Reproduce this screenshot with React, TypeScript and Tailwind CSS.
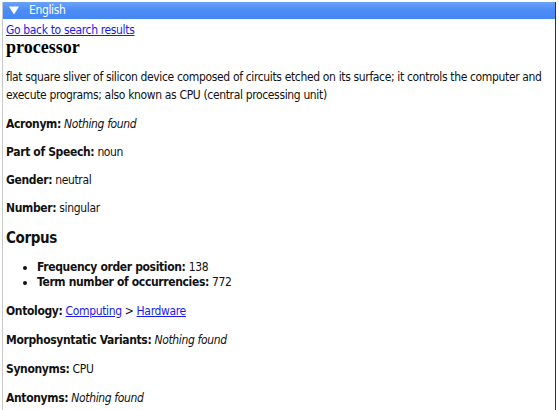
import React from "react";

const fields = [
  { label: "Acronym", value: "Nothing found", italic: true },
  { label: "Part of Speech", value: "noun" },
  { label: "Gender", value: "neutral" },
  { label: "Number", value: "singular" },
];

const lower = [
  { label: "Morphosyntatic Variants", value: "Nothing found", italic: true },
  { label: "Synonyms", value: "CPU" },
  { label: "Antonyms", value: "Nothing found", italic: true },
];

function Field({ label, value, italic }: { label: string; value: string; italic?: boolean }) {
  return (
    <p className="leading-[16px] mt-[12px] first:mt-[12px]">
      <b>{label}:</b> {italic ? <i>{value}</i> : value}
    </p>
  );
}

export default function App() {
  return (
    <div
      className="w-[559px] h-[410px] overflow-hidden bg-white text-[12px] tracking-[-0.35px] text-[#111]"
      style={{ fontFamily: '"DejaVu Sans Condensed", "DejaVu Sans", sans-serif' }}
    >
      <div className="mt-[2px] ml-[2px] w-[554px] h-[408px] border-l border-[#c8c8c8] border-r border-r-[#333]">
        <div className="h-[17px] bg-gradient-to-b from-[#6aa2f8] via-[#4b8bf5] to-[#4587f4] text-white flex items-center pl-[5px] leading-[17px]">
          <svg width="10" height="9" viewBox="0 0 10 9" className="ml-[1px] mr-[10px]">
            <path d="M0 0.5h10L5 8.5z" fill="white" />
          </svg>
          <span>English</span>
        </div>
        <div className="pl-[3px]">
          <a href="#" className="block mt-[4px] leading-[14px] text-[#1a1aee] underline">
            Go back to search results
          </a>
          <h1
            className="text-[18px] font-bold leading-[20px] tracking-normal text-black"
            style={{ fontFamily: '"Liberation Serif", "Times New Roman", serif' }}
          >
            processor
          </h1>
          <p className="mt-[11px] leading-[18px]">
            flat square sliver of silicon device composed of circuits etched on its surface; it controls the computer
            and execute programs; also known as CPU (central processing unit)
          </p>
          <div>
            {fields.map((f) => (
              <Field key={f.label} {...f} />
            ))}
          </div>
          <h2 className="mt-[12px] text-[15px] font-bold leading-[20px]">Corpus</h2>
          <ul className="mt-[11.5px] pl-[31px] list-disc leading-[15.5px]">
            <li>
              <b>Frequency order position:</b> 138
            </li>
            <li>
              <b>Term number of occurrencies:</b> 772
            </li>
          </ul>
          <p className="leading-[16px] mt-[12.5px]">
            <b>Ontology:</b>{" "}
            <a href="#" className="text-[#1a1aee] underline">
              Computing
            </a>{" "}
            &gt;{" "}
            <a href="#" className="text-[#1a1aee] underline">
              Hardware
            </a>
          </p>
          <div>
            {lower.map((f) => (
              <p key={f.label} className="leading-[16px] mt-[13px]">
                <b>{f.label}:</b> {f.italic ? <i>{f.value}</i> : f.value}
              </p>
            ))}
          </div>
        </div>
      </div>
    </div>
  );
}
